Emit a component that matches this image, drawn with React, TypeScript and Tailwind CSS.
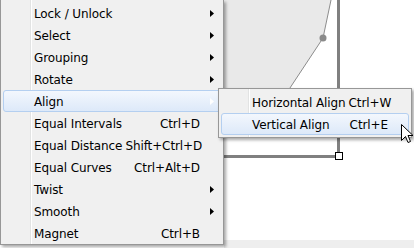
import { ReactNode } from 'react';

type Item = {
  label: string;
  shortcut?: string;
  sub?: boolean;
  active?: boolean;
};

const mainItems: Item[] = [
  { label: 'Lock / Unlock', sub: true },
  { label: 'Select', sub: true },
  { label: 'Grouping', sub: true },
  { label: 'Rotate', sub: true },
  { label: 'Align', sub: true, active: true },
  { label: 'Equal Intervals', shortcut: 'Ctrl+D' },
  { label: 'Equal Distance', shortcut: 'Shift+Ctrl+D' },
  { label: 'Equal Curves', shortcut: 'Ctrl+Alt+D' },
  { label: 'Twist', sub: true },
  { label: 'Smooth', sub: true },
  { label: 'Magnet', shortcut: 'Ctrl+B' },
];

const alignItems: Item[] = [
  { label: 'Horizontal Align', shortcut: 'Ctrl+W' },
  { label: 'Vertical Align', shortcut: 'Ctrl+E', active: true },
];

function Arrow({ light }: { light?: boolean }) {
  return (
    <svg width="4" height="7" viewBox="0 0 4 7" className="block">
      <path d="M0 0 L4 3.5 L0 7 Z" fill={light ? '#ffffff' : '#000000'} />
    </svg>
  );
}

function MenuRow({ item }: { item: Item }) {
  return (
    <div
      className={`mx-[2px] flex h-[22px] items-center rounded-[3px] border pt-px pl-[30px] ${
        item.active
          ? 'border-[#b4cff0] bg-gradient-to-b from-[#f3f7fd] to-[#dde9f9]'
          : 'border-transparent'
      }`}
    >
      <span className="flex-1 whitespace-nowrap">{item.label}</span>
      {item.shortcut && <span className="ml-[3px] whitespace-nowrap">{item.shortcut}</span>}
      <span className="flex w-[20px] shrink items-center pl-[10px]">
        {item.sub && <Arrow light={item.active} />}
      </span>
    </div>
  );
}

function Menu({ items, className, children }: { items: Item[]; className: string; children?: ReactNode }) {
  return (
    <div className={`absolute bg-[#f0f0f0] shadow-[2px_2px_3px_rgba(0,0,0,0.35)] ${className}`}>
      <div className="absolute top-0 bottom-0 left-[29px] w-px bg-[#e2e3e3]" />
      <div className="absolute top-0 bottom-0 left-[30px] w-px bg-white" />
      <div className="relative">
        {items.map((item) => (
          <MenuRow key={item.label} item={item} />
        ))}
      </div>
      {children}
    </div>
  );
}

function Canvas() {
  return (
    <svg width="414" height="248" className="absolute left-0 top-0">
      <polygon points="224,0 331,0 323,38 282,100 224,100" fill="#e9e9e9" />
      <polyline points="331,0 323,38 282,100" fill="none" stroke="#8c8c8c" strokeWidth="1" />
      <circle cx="323" cy="38" r="3.5" fill="#8a8a8a" />
      <rect x="337" y="0" width="3" height="156" fill="#808080" />
      <rect x="224" y="155" width="114" height="3" fill="#808080" />
      <rect x="335.5" y="152.5" width="7" height="7" fill="#ffffff" stroke="#000000" strokeWidth="1" />
      <rect x="224" y="240" width="190" height="8" fill="#eeeeee" />
    </svg>
  );
}

function Cursor() {
  return (
    <svg width="13" height="21" viewBox="0 0 13 21" className="absolute left-[401px] top-[124px]">
      <path
        d="M0.5 0.5 L0.5 16.5 L4.5 12.5 L7 18.5 L9.5 17.5 L7 11.5 L12 11.5 Z"
        fill="#ffffff"
        stroke="#000000"
        strokeWidth="1"
      />
    </svg>
  );
}

export default function App() {
  return (
    <div
      className="relative h-[248px] w-[414px] overflow-hidden bg-white text-[12px] tracking-[-0.1px] text-black"
      style={{ fontFamily: '"DejaVu Sans", "Liberation Sans", sans-serif' }}
    >
      <Canvas />
      <Menu items={mainItems} className="left-0 top-0 w-[224px] border-x border-b border-[#979797] pt-[2px]" />
      <Menu items={alignItems} className="left-[218px] top-[88px] w-[194px] border border-[#979797] py-[2px]" />
      <Cursor />
    </div>
  );
}
